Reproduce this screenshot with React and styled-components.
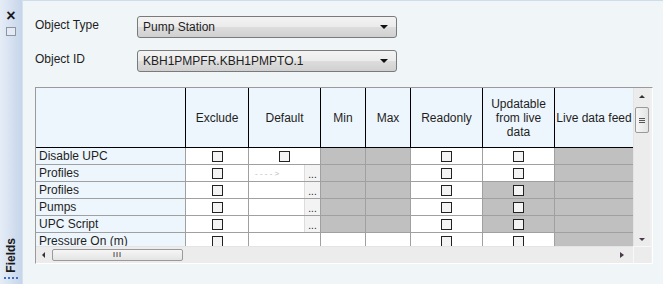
import React from 'react';
import styled, { createGlobalStyle } from 'styled-components';

const GlobalStyle = createGlobalStyle`
  html, body { margin: 0; padding: 0; }
  body {
    width: 663px;
    height: 284px;
    overflow: hidden;
    background: #f0f6f8;
    font-family: "Liberation Sans", "Noto Sans", sans-serif;
    font-size: 12px;
    color: #1e1e1e;
  }
`;

const COLS = '149px 63px 72px 45px 45px 72px 72px 79px';

const Shell = styled.div`
  display: flex;
  width: 663px;
  height: 284px;
`;

const SideBar = styled.div`
  width: 22px;
  display: flex;
  flex-direction: column;
  justify-content: space-between;
  align-items: center;
  background: linear-gradient(to right, #e6edf7, #c6d5ea);
  border-right: 1px solid #d6e1ee;
`;

const SideButtons = styled.div`
  display: flex;
  flex-direction: column;
  align-items: center;
  padding-top: 11px;
  gap: 6px;
`;

const CloseX = styled.span`
  font-size: 16px;
  line-height: 10px;
  font-weight: bold;
  color: #1a1a1a;
`;

const PinBox = styled.span`
  width: 8px;
  height: 7px;
  border: 1px solid #8a96a4;
  background: #e3eaf3;
`;

const FieldsTab = styled.div`
  display: flex;
  flex-direction: column;
  align-items: center;
  padding-bottom: 5px;
`;

const FieldsLabel = styled.span`
  writing-mode: vertical-rl;
  transform: rotate(180deg);
  font-weight: bold;
  font-size: 12px;
  color: #1a1a1a;
  margin-bottom: 4px;
`;

const Dots = styled.span`
  width: 14px;
  border-top: 2px dotted #3b6fc4;
`;

const Main = styled.div`
  flex: 1;
  border-top: 1px solid #cfdcec;
  padding: 15px 0 0 12px;
`;

const Form = styled.div`
  display: grid;
  grid-template-columns: 102px 260px;
  row-gap: 12px;
  align-items: center;
`;

const Label = styled.label`
  font-size: 12px;
  padding-bottom: 4px;
`;

const Select = styled.div`
  box-sizing: border-box;
  height: 22px;
  border: 1px solid #7a7a7a;
  border-radius: 3px;
  background: linear-gradient(#f3f3f3, #ebebeb 50%, #dddddd 50%, #d0d0d0);
  display: flex;
  align-items: center;
  justify-content: space-between;
  padding: 0 8px 0 5px;
  font-size: 12px;
`;

const Caret = styled.span`
  width: 0;
  height: 0;
  border-left: 4px solid transparent;
  border-right: 4px solid transparent;
  border-top: 4px solid #111;
`;

const Frame = styled.div`
  margin-top: 15px;
  width: 616px;
  height: 175px;
  border: 1px solid #9a9a9a;
  border-right-color: #ffffff;
  border-bottom-color: #ffffff;
  display: flex;
  flex-direction: column;
  background: #f0f0f0;
`;

const Upper = styled.div`
  display: flex;
  height: 158px;
`;

const TableArea = styled.div`
  width: 597px;
  overflow: hidden;
  background: #ffffff;
`;

const Row = styled.div`
  display: grid;
  grid-template-columns: ${COLS};
  height: ${(p) => (p.$header ? '59px' : '16px')};
  border-bottom: 1px solid ${(p) => (p.$header ? '#000' : '#a0a0a0')};
`;

const HeadCell = styled.div`
  background: #eef6fd;
  border-left: ${(p) => (p.$first ? 'none' : '1px solid #000')};
  display: flex;
  align-items: center;
  justify-content: center;
  text-align: center;
  line-height: 14px;
  font-size: 12px;
  padding-top: 1px;
  white-space: pre-line;
`;

const RowHead = styled.div`
  background: #eef6fd;
  padding-left: 3px;
  line-height: 16px;
  font-size: 12px;
  white-space: nowrap;
`;

const Cell = styled.div`
  border-left: 1px solid #a0a0a0;
  background: ${(p) => (p.$off ? '#c0c0c0' : '#ffffff')};
  display: flex;
  align-items: center;
  justify-content: center;
`;

const Check = styled.span`
  width: 9px;
  height: 9px;
  border: 1px solid #222;
  background: #f4f4f4;
`;

const Arrow = styled.span`
  flex: 1;
  color: #b8b8b8;
  font-size: 8px;
  padding-left: 6px;
`;

const Ellipsis = styled.span`
  width: 15px;
  height: 16px;
  background: #f3f3f3;
  border-left: 1px solid #dcdcdc;
  display: flex;
  align-items: flex-end;
  justify-content: center;
  font-size: 10px;
  line-height: 12px;
`;

const VScroll = styled.div`
  width: 17px;
  display: flex;
  flex-direction: column;
  align-items: center;
  padding: 7px 0 5px;
  box-sizing: border-box;
  background: #ececec;
  border-left: 1px solid #e4e4e4;
`;

const Tri = styled.span`
  width: 0;
  height: 0;
  border-left: 3px solid transparent;
  border-right: 3px solid transparent;
  ${(p) => (p.$dir === 'up' ? 'border-bottom: 3px solid #333;' : 'border-top: 3px solid #4a3a48;')}
`;

const HTri = styled.span`
  width: 0;
  height: 0;
  border-top: 3px solid transparent;
  border-bottom: 3px solid transparent;
  ${(p) => (p.$dir === 'left' ? 'border-right: 3px solid #333;' : 'border-left: 4px solid #4a3a48;')}
`;

const Thumb = styled.div`
  box-sizing: border-box;
  border: 1px solid #9a9a9a;
  border-radius: 2px;
  background: linear-gradient(${(p) => (p.$h ? 'to bottom' : 'to right')}, #f6f6f6, #e4e4e4);
  display: flex;
  align-items: center;
  justify-content: center;
  color: #555;
`;

const VThumb = styled(Thumb)`
  width: 14px;
  height: 26px;
  margin-top: 9px;
  flex-direction: column;
  gap: 1px;
`;

const Grip = styled.span`
  width: 6px;
  border-top: 1px solid #555;
`;

const Spacer = styled.div`
  flex: 1;
`;

const Lower = styled.div`
  display: flex;
  height: 17px;
`;

const HScroll = styled.div`
  width: 597px;
  display: flex;
  align-items: center;
  background: #ececec;
  border-top: 1px solid #e4e4e4;
  padding: 0 9px 0 6px;
  box-sizing: border-box;
`;

const HThumb = styled(Thumb)`
  width: 131px;
  height: 12px;
  margin-left: 7px;
  font-size: 7px;
  line-height: 8px;
  letter-spacing: 1px;
  font-weight: bold;
`;

const Corner = styled.div`
  width: 17px;
  background: #ececec;
  border-left: 1px solid #f8f8f8;
  border-top: 1px solid #f8f8f8;
`;

const headers = ['', 'Exclude', 'Default', 'Min', 'Max', 'Readonly', 'Updatable\nfrom live\ndata', 'Live data feed'];

const rows = [
  { name: 'Disable UPC', def: 'check', upd: false },
  { name: 'Profiles', def: 'arrow', upd: false },
  { name: 'Profiles', def: 'button', upd: true },
  { name: 'Pumps', def: 'button', upd: true },
  { name: 'UPC Script', def: 'button', upd: true },
  { name: 'Pressure On (m)', def: 'empty', upd: false, open: true },
];

const DefaultCell = ({ kind }) => {
  if (kind === 'check') return <Cell><Check /></Cell>;
  if (kind === 'empty') return <Cell />;
  return (
    <Cell>
      <Arrow>{kind === 'arrow' ? '- - - - >' : ''}</Arrow>
      <Ellipsis>...</Ellipsis>
    </Cell>
  );
};

const App = () => (
  <>
    <GlobalStyle />
    <Shell>
      <SideBar>
        <SideButtons>
          <CloseX>×</CloseX>
          <PinBox />
        </SideButtons>
        <FieldsTab>
          <FieldsLabel>Fields</FieldsLabel>
          <Dots />
        </FieldsTab>
      </SideBar>
      <Main>
        <Form>
          <Label>Object Type</Label>
          <Select>
            Pump Station
            <Caret />
          </Select>
          <Label>Object ID</Label>
          <Select>
            KBH1PMPFR.KBH1PMPTO.1
            <Caret />
          </Select>
        </Form>
        <Frame>
          <Upper>
            <TableArea>
              <Row $header>
                {headers.map((h, i) => (
                  <HeadCell key={i} $first={i === 0}>{h}</HeadCell>
                ))}
              </Row>
              {rows.map((r, i) => (
                <Row key={i}>
                  <RowHead>{r.name}</RowHead>
                  <Cell><Check /></Cell>
                  <DefaultCell kind={r.def} />
                  <Cell $off={!r.open} />
                  <Cell $off={!r.open} />
                  <Cell><Check /></Cell>
                  <Cell $off={r.upd}><Check /></Cell>
                  <Cell $off />
                </Row>
              ))}
            </TableArea>
            <VScroll>
              <Tri $dir="up" />
              <VThumb>
                <Grip />
                <Grip />
                <Grip />
              </VThumb>
              <Spacer />
              <Tri $dir="down" />
            </VScroll>
          </Upper>
          <Lower>
            <HScroll>
              <HTri $dir="left" />
              <HThumb $h>III</HThumb>
              <Spacer />
              <HTri $dir="right" />
            </HScroll>
            <Corner />
          </Lower>
        </Frame>
      </Main>
    </Shell>
  </>
);

export default App;
